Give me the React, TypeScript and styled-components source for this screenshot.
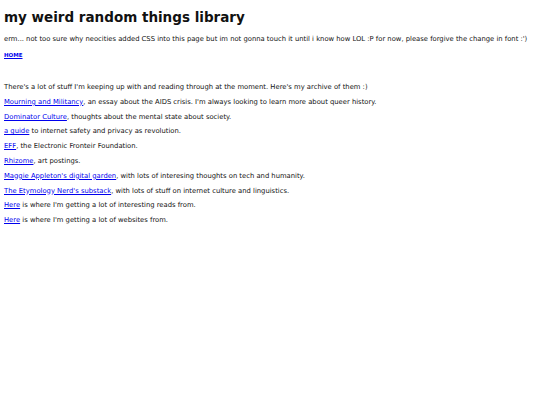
import React from 'react';
import styled, { createGlobalStyle } from 'styled-components';

const GlobalStyle = createGlobalStyle`
    body {
        margin: 0;
        background: #fff;
        color: #111;
        font-family: 'DejaVu Sans', Verdana, sans-serif;
    }
`;

const Page = styled.div`
    padding: 0 4px;
`;

const Title = styled.h1`
    font-size: 13.5px;
    font-weight: bold;
    margin: 9px 0 10px;
`;

const Text = styled.p`
    font-size: 6.8px;
    margin: 6.8px 0;
`;

const Nav = styled.p`
    font-size: 5.5px;
    font-weight: bold;
    margin: 9px 0 25px;
`;

const Link = styled.a`
    color: #0000ee;
    text-decoration: underline;
`;

type Entry = { label: string; rest: string };

const entries: Entry[] = [
    { label: 'Mourning and Militancy', rest: ", an essay about the AIDS crisis. I'm always looking to learn more about queer history." },
    { label: 'Dominator Culture', rest: ', thoughts about the mental state about society.' },
    { label: 'a guide', rest: ' to internet safety and privacy as revolution.' },
    { label: 'EFF', rest: ', the Electronic Fronteir Foundation.' },
    { label: 'Rhizome', rest: ', art postings.' },
    { label: "Maggie Appleton's digital garden", rest: ', with lots of interesing thoughts on tech and humanity.' },
    { label: "The Etymology Nerd's substack", rest: ', with lots of stuff on internet culture and linguistics.' },
    { label: 'Here', rest: " is where I'm getting a lot of interesting reads from." },
    { label: 'Here', rest: " is where I'm getting a lot of websites from." },
];

export default function App() {
    return (
        <Page>
            <GlobalStyle />
            <Title>my weird random things library</Title>
            <Text>
                erm... not too sure why neocities added CSS into this page but im not gonna touch it until i know how LOL :P for now, please forgive the change in font :')
            </Text>
            <Nav>
                <Link href="#">HOME</Link>
            </Nav>
            <Text>There's a lot of stuff I'm keeping up with and reading through at the moment. Here's my archive of them :)</Text>
            {entries.map((e, i) => (
                <Text key={i}>
                    <Link href="#">{e.label}</Link>
                    {e.rest}
                </Text>
            ))}
        </Page>
    );
}
